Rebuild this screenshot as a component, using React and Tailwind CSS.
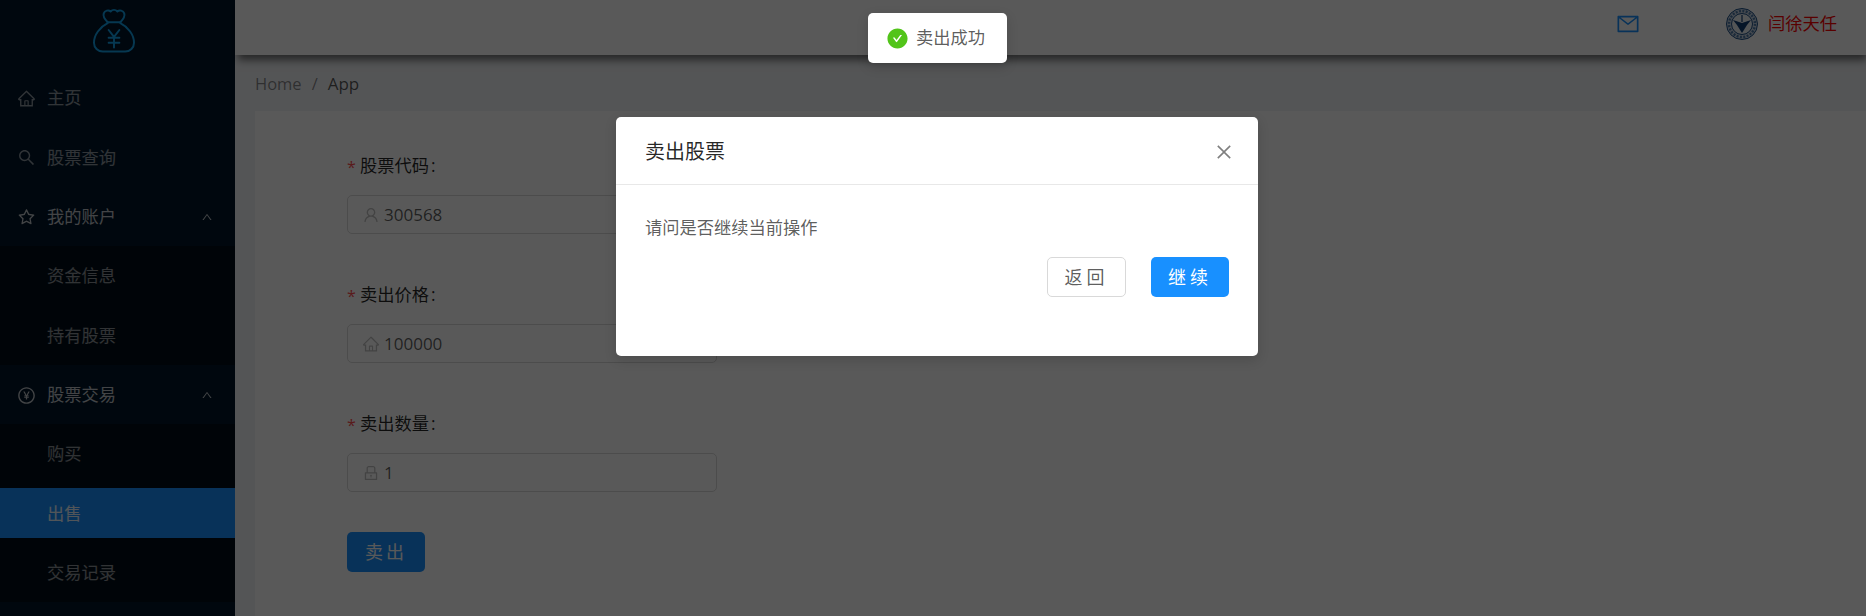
import React from 'react';
import {
  AiOutlineHome,
  AiOutlineSearch,
  AiOutlineStar,
  AiOutlinePayCircle,
  AiOutlineUp,
  AiOutlineMail,
  AiOutlineUser,
  AiOutlineLock,
  AiFillCheckCircle,
  AiOutlineClose,
} from 'react-icons/ai';

function MoneyBag() {
  return (
    <svg width="42" height="45" viewBox="0 0 43 45" fill="none" stroke="#13a0e8" strokeWidth="2" strokeLinecap="round" strokeLinejoin="round">
      <path d="M15 14C12 11 10 8 11 5c1-3 5-4 7-2 2-2 5-2 7 0 2-2 6-1 7 2 1 3-1 6-4 9" />
      <path d="M15 14h13" />
      <path d="M15 15C7 19 1 27 1 35c0 5 4 9 9 9h23c5 0 9-4 9-9 0-8-6-16-14-20" />
      <path d="M16 22l5.5 7 5.5-7M16 30h11M16 35h11M21.5 29v11" />
    </svg>
  );
}

function SchoolSeal() {
  return (
    <svg width="32" height="32" viewBox="0 0 32 32">
      <circle cx="16" cy="16" r="15.5" fill="#c8d4e3" stroke="#1d4f86" strokeWidth="1" />
      <circle cx="16" cy="16" r="13" fill="none" stroke="#4f7aa6" strokeWidth="2.4" strokeDasharray="2 1.4" />
      <circle cx="16" cy="16" r="10.5" fill="#eef2f7" stroke="#1d4f86" strokeWidth="1" />
      <path d="M7 12l9 3 9-3-4 5-5 8-5-8z" fill="#0f3c72" />
      <path d="M16 7v7" stroke="#0f3c72" strokeWidth="1.2" />
    </svg>
  );
}

function MenuItem({ label, icon, selected }) {
  return (
    <div className={`h-[50px] flex items-center text-[17.25px] pt-[2px] ${icon ? 'pl-[17px]' : 'pl-[47px]'} ${selected ? 'bg-[#1890ff] text-white/90' : 'text-white/55'}`}>
      {icon && <span className="w-[30px] text-[19px] flex items-center">{icon}</span>}
      {label}
    </div>
  );
}

function MenuGroup({ children }) {
  return <div className="flex flex-col gap-[9.5px] py-[4.75px]">{children}</div>;
}

function SubMenu({ label, icon, children }) {
  return (
    <div>
      <div className="h-[59px] flex items-center pl-[17px] pr-[22px] pt-[2px] text-[17.25px] text-white/75">
        <span className="w-[30px] text-[19px] flex items-center">{icon}</span>
        <span className="flex-1">{label}</span>
        <AiOutlineUp className="text-[12px]" />
      </div>
      <div className="bg-[#000c17]">
        <MenuGroup>{children}</MenuGroup>
      </div>
    </div>
  );
}

function Field({ label, value, icon }) {
  return (
    <div className="mb-[41px] w-[370px]">
      <div className="h-[39px] flex items-center text-[17.25px] text-black/85">
        <span className="text-[#ff4d4f] w-[13px] text-[16px] leading-none pt-[3px]">*</span>
        <span>{label}</span>
        <span className="ml-[2px]">:</span>
      </div>
      <div className="mt-[10px] h-[39px] border border-[#d9d9d9] rounded-[5px] flex items-center pl-[14px] text-[17px] text-black/65">
        <span className="w-[22px] text-[18px] text-black/25 flex items-center">{icon}</span>
        {value}
      </div>
    </div>
  );
}

export default function App() {
  return (
    <div className="relative h-[616px] w-full overflow-hidden flex font-['Open_Sans','Noto_Sans_CJK_SC',sans-serif] bg-[#f0f2f5]">
      <aside className="w-[235px] shrink-0 bg-[#001529]">
        <div className="h-[67.5px] flex justify-center items-start pt-[8px] pr-[8px]">
          <MoneyBag />
        </div>
        <MenuGroup>
          <MenuItem label="主页" icon={<AiOutlineHome />} />
          <MenuItem label="股票查询" icon={<AiOutlineSearch />} />
        </MenuGroup>
        <SubMenu label="我的账户" icon={<AiOutlineStar />}>
          <MenuItem label="资金信息" />
          <MenuItem label="持有股票" />
        </SubMenu>
        <SubMenu label="股票交易" icon={<AiOutlinePayCircle />}>
          <MenuItem label="购买" />
          <MenuItem label="出售" selected />
          <MenuItem label="交易记录" />
        </SubMenu>
      </aside>

      <main className="flex-1 min-w-0 flex flex-col">
        <header className="h-[55px] shrink-0 bg-white shadow-[2px_6px_8px_-1px_rgba(0,0,0,0.55)] flex items-center justify-end relative pb-[7px]">
          <AiOutlineMail className="text-[24px] text-[#1890ff] mr-[86px]" />
          <SchoolSeal />
          <span className="ml-[10px] mr-[29px] text-[17.25px] text-[#ff0000]">闫徐天任</span>
        </header>
        <div className="h-[56px] shrink-0 flex items-center pl-[20px] pt-[2px] text-[16.5px] text-black/45">
          <span>Home</span>
          <span className="mx-[10px]">/</span>
          <span className="text-black/65 text-[17px]">App</span>
        </div>
        <section className="flex-1 ml-[20px] bg-white pl-[92px] pt-[35px]">
          <Field label="股票代码" value="300568" icon={<AiOutlineUser />} />
          <Field label="卖出价格" value="100000" icon={<AiOutlineHome />} />
          <Field label="卖出数量" value="1" icon={<AiOutlineLock />} />
          <button className="w-[78px] h-[40px] -mt-[1px] rounded-[5px] bg-[#1890ff] text-white text-[18px] tracking-[3px]">卖出</button>
        </section>
      </main>

      <div className="absolute inset-0 bg-black/65" />

      <div className="absolute left-[868px] top-[13px] w-[139px] h-[50px] bg-white rounded-[5px] shadow-[0_4px_12px_rgba(0,0,0,0.15)] flex items-center pl-[18px] text-[17.25px] text-black/65">
        <AiFillCheckCircle className="text-[23px] text-[#52c41a] mr-[7px]" />
        卖出成功
      </div>

      <div className="absolute left-[616px] top-[117px] w-[642px] h-[239px] bg-white rounded-[5px] shadow-[0_4px_12px_rgba(0,0,0,0.15)]">
        <div className="h-[68px] border-b border-[#e8e8e8] flex items-center justify-between pl-[29px] pr-[24px] pt-[2px]">
          <span className="text-[20px] text-black/85">卖出股票</span>
          <AiOutlineClose className="text-[20px] text-black/50" />
        </div>
        <div className="pt-[31px] px-[29px] text-[17.25px] text-black/65">
          <p className="leading-[24px]">请问是否继续当前操作</p>
          <div className="mt-[17px] flex justify-end gap-[25px]">
            <button className="w-[79px] h-[40px] rounded-[5px] border border-[#d9d9d9] text-black/65 text-[18px] tracking-[4px]">返回</button>
            <button className="w-[78px] h-[40px] rounded-[5px] bg-[#1890ff] text-white text-[18px] tracking-[4px]">继续</button>
          </div>
        </div>
      </div>
    </div>
  );
}
